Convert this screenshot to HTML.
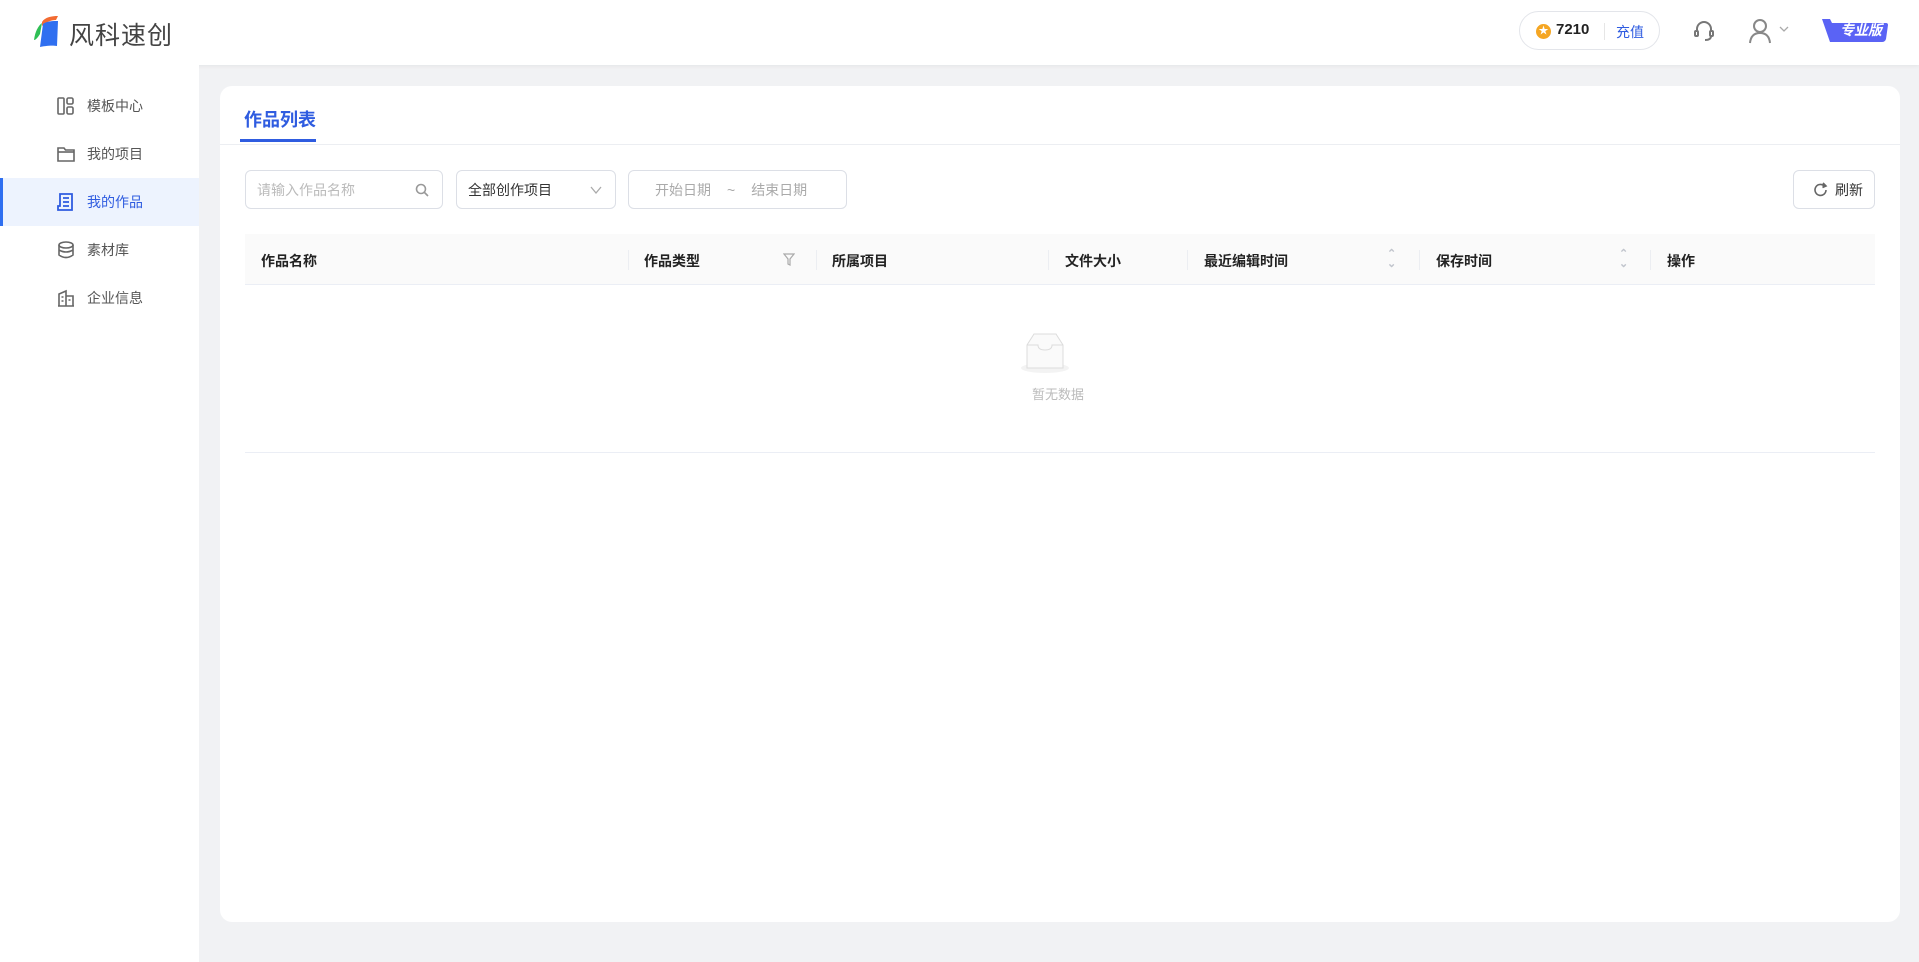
<!DOCTYPE html>
<html><head><meta charset="utf-8"><style>
*{box-sizing:border-box;margin:0;padding:0}
body{width:1919px;height:962px;background:#f1f2f4;font-family:"Liberation Sans","Noto Sans CJK SC",sans-serif;position:relative;overflow:hidden;color:#333}
.hdr{position:absolute;left:0;top:0;width:1919px;height:65px;background:#fff;box-shadow:0 1px 4px rgba(0,0,0,.06)}
.side{position:absolute;left:0;top:65px;width:199px;height:897px;background:#fff}
.item{position:absolute;left:0;width:199px;height:48px;display:flex;align-items:center;font-size:14px;color:#555}
.item svg{position:absolute;left:57px}
.item span{position:absolute;left:87px}
.item.act{background:#edf3fe;color:#2f5ce0}
.item.act:before{content:"";position:absolute;left:0;top:0;width:3px;height:48px;background:#2f6ff0}
.card{position:absolute;left:220px;top:86px;width:1680px;height:836px;background:#fff;border-radius:12px}
.box{position:absolute;border:1px solid #dcdfe6;border-radius:6px;height:39px;top:170px;font-size:14px;display:flex;align-items:center}
.th{position:absolute;top:234px;left:245px;width:1630px;height:51px;background:#fafafa;border-bottom:1px solid #ebeef5;font-size:14px;font-weight:bold;color:#222}
.th span{position:absolute;top:17px}
.th i{position:absolute;top:16px;width:1px;height:20px;background:#eceef2}
.sort{position:absolute;top:15px;font-size:11px;color:#c0c4cc;line-height:10px;font-style:normal}
</style></head><body>
<div class="hdr">
 <svg style="position:absolute;left:32px;top:14px" width="30" height="34" viewBox="0 0 30 34"><path d="M10 8 C13 3 20 2 26 2 L24 6 C19 6 14 8 10 12Z" fill="#f26b32"/><path d="M2 26 C3 18 6 12 10 9 L8 20 C6 23 4 26 2 26Z" fill="#2fbf55"/><path d="M11 10 C15 7 21 7 26 7 L25 32 C20 31 12 32 8 33 Z" fill="#2f6ff0"/></svg>
 <div style="position:absolute;left:69px;top:16px;font-size:25px;color:#444;letter-spacing:1px">风科速创</div>
 <div style="position:absolute;left:1519px;top:11px;width:141px;height:39px;border:1px solid #e3e5ea;border-radius:20px">
  <div style="position:absolute;left:16px;top:12px;width:15px;height:15px;border-radius:50%;background:#f5a623;color:#fff;font-size:10px;line-height:15px;text-align:center">★</div>
  <div style="position:absolute;left:36px;top:9px;font-size:15px;font-weight:bold;color:#222">7210</div>
  <div style="position:absolute;left:84px;top:11px;width:1px;height:17px;background:#e6e6e6"></div>
  <div style="position:absolute;left:96px;top:10px;font-size:14px;color:#2f5ce0">充值</div>
 </div>
 <svg style="position:absolute;left:1693px;top:19px" width="22" height="24" viewBox="0 0 22 24" fill="none" stroke="#777" stroke-width="2"><path d="M4 13 V10 a7 7 0 0 1 14 0 V13"/><rect x="2" y="12" width="3" height="5" rx="1"/><rect x="17" y="12" width="3" height="5" rx="1"/><path d="M18 17 Q18 21 12 21"/></svg>
 <svg style="position:absolute;left:1749px;top:18px" width="22" height="26" viewBox="0 0 22 26" fill="none" stroke="#888" stroke-width="2"><circle cx="11" cy="8" r="6"/><path d="M1 25 Q2 15 11 15 Q20 15 21 25"/></svg>
 <svg style="position:absolute;left:1779px;top:26px" width="10" height="7" viewBox="0 0 10 7" fill="none" stroke="#aaa" stroke-width="1.3"><path d="M1 1 L5 5 L9 1"/></svg>
 <svg style="position:absolute;left:1822px;top:19px" width="66" height="24" viewBox="0 0 66 24"><path d="M0 0 L8 0 L10 4 L64 4 Q66 4 66 6 L64 20 Q63 23 60 23 L8 23 Z" fill="#5a63f5"/></svg>
 <div style="position:absolute;left:1840px;top:20px;font-size:14px;font-weight:bold;font-style:italic;color:#fff">专业版</div>
</div>
<div class="side">
 <div class="item" style="top:17px"><svg width="18" height="18" viewBox="0 0 18 18" fill="none" stroke="#666" stroke-width="1.6"><rect x="1" y="1" width="6" height="16" rx="1"/><rect x="10" y="1" width="6" height="6" rx="1.5"/><rect x="10" y="10" width="6" height="7" rx="1.5"/></svg><span>模板中心</span></div>
 <div class="item" style="top:65px"><svg width="18" height="18" viewBox="0 0 18 18" fill="none" stroke="#666" stroke-width="1.6"><path d="M1 3 H7 L8.5 5 H17 V16 H1 Z"/><path d="M1 7 H17"/></svg><span>我的项目</span></div>
 <div class="item act" style="top:113px"><svg width="18" height="18" viewBox="0 0 18 18" fill="none" stroke="#2f5ce0" stroke-width="1.8"><path d="M3 1 H15 V17 H1 V13 H3 Z"/><path d="M6 5 H12 M6 9 H12 M6 13 H12"/></svg><span>我的作品</span></div>
 <div class="item" style="top:161px"><svg width="18" height="18" viewBox="0 0 18 18" fill="none" stroke="#666" stroke-width="1.6"><ellipse cx="9" cy="4" rx="7" ry="3"/><path d="M2 4 V14 Q9 19 16 14 V4 M2 9 Q9 13 16 9"/></svg><span>素材库</span></div>
 <div class="item" style="top:209px"><svg width="18" height="18" viewBox="0 0 18 18" fill="none" stroke="#666" stroke-width="1.6"><path d="M1 17 H17 M2 17 V5 L9 2 V17 M9 7 H16 V17 M4.5 8 H6.5 M4.5 12 H6.5 M11.5 11 H13.5"/></svg><span>企业信息</span></div>
</div>
<div class="card">
 <div style="position:absolute;left:24px;top:20px;font-size:18px;font-weight:bold;color:#2f5ce0">作品列表</div>
 <div style="position:absolute;left:20px;top:53px;width:76px;height:3px;background:#2f5ce0"></div>
 <div style="position:absolute;left:0;top:58px;width:1680px;height:1px;background:#eceef2"></div>
</div>
<div class="box" style="left:245px;width:198px;color:#bbb"><span style="margin-left:11px">请输入作品名称</span>
 <svg style="position:absolute;right:13px;top:12px" width="14" height="14" viewBox="0 0 14 14" fill="none" stroke="#999" stroke-width="1.6"><circle cx="6" cy="6" r="4.5"/><path d="M9.5 9.5 L13 13"/></svg></div>
<div class="box" style="left:456px;width:160px;color:#333"><span style="margin-left:11px">全部创作项目</span>
 <svg style="position:absolute;right:13px;top:15px" width="12" height="8" viewBox="0 0 12 8" fill="none" stroke="#aaa" stroke-width="1.3"><path d="M1 1 L6 7 L11 1"/></svg></div>
<div class="box" style="left:628px;width:219px;color:#aaa"><span style="margin-left:26px">开始日期</span><span style="margin-left:16px">~</span><span style="margin-left:16px">结束日期</span></div>
<div class="box" style="left:1793px;width:82px;color:#333"><svg style="margin-left:19px" width="16" height="16" viewBox="0 0 16 16" fill="none" stroke="#666" stroke-width="1.6"><path d="M13 8 A5.5 5.5 0 1 1 10.5 3.3"/><path d="M10 1 L13 4 L9.5 5.5" fill="#666"/></svg><span style="margin-left:6px">刷新</span></div>
<div class="th">
 <span style="left:16px">作品名称</span>
 <i style="left:383px"></i><span style="left:399px">作品类型</span>
 <svg style="position:absolute;left:538px;top:19px" width="12" height="13" viewBox="0 0 12 13" fill="none" stroke="#aaa" stroke-width="1.2"><path d="M1 1 H11 L7 6 V12 L5 11 V6 Z"/></svg>
 <i style="left:571px"></i><span style="left:587px">所属项目</span>
 <i style="left:803px"></i><span style="left:820px">文件大小</span>
 <i style="left:942px"></i><span style="left:959px">最近编辑时间</span>
 <em class="sort" style="left:1142px">⌃<br>⌄</em>
 <i style="left:1174px"></i><span style="left:1191px">保存时间</span>
 <em class="sort" style="left:1374px">⌃<br>⌄</em>
 <i style="left:1405px"></i><span style="left:1422px">操作</span>
</div>
<svg style="position:absolute;left:1020px;top:332px" width="50" height="42" viewBox="0 0 50 42"><ellipse cx="25" cy="36" rx="24" ry="5" fill="#f3f3f3"/><path d="M7 13 L14 2 H36 L43 13 V36 H7 Z" fill="#fafafa" stroke="#dcdcdc"/><path d="M7 13 H18 Q18 18 25 18 Q32 18 32 13 H43" fill="none" stroke="#dcdcdc"/></svg>
<div style="position:absolute;left:1032px;top:384px;font-size:13px;color:#bbb">暂无数据</div>
<div style="position:absolute;left:245px;top:452px;width:1630px;height:1px;background:#ebeef5"></div>
</body></html>
